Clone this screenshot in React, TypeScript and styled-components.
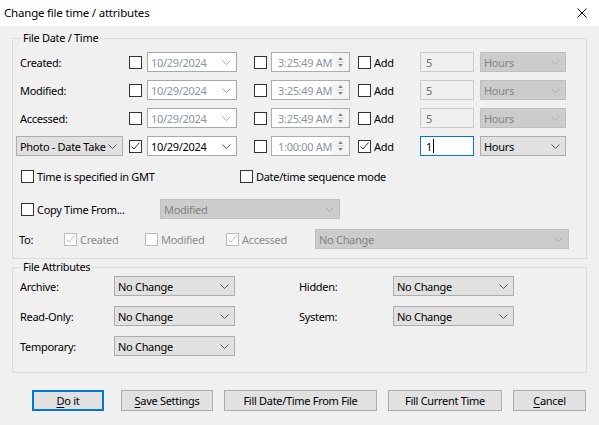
import React from 'react';
import styled, { createGlobalStyle, css } from 'styled-components';

const GlobalStyle = createGlobalStyle`
  html, body {
    margin: 0;
    padding: 0;
    background: #f0f0f0;
  }
  body {
    font-family: "Noto Sans", "Open Sans", sans-serif;
    font-size: 11px;
    letter-spacing: -0.3px;
    color: #000;
  }
`;

const Window = styled.div`
  width: 599px;
  height: 425px;
  display: flex;
  flex-direction: column;
  background: #f0f0f0;
  overflow: hidden;
`;

const TitleBar = styled.div`
  height: 26px;
  flex: none;
  background: #fff;
  display: flex;
  align-items: center;
  justify-content: space-between;
  padding-left: 4px;
`;

const Title = styled.span`
  font-size: 11.5px;
  letter-spacing: -0.2px;
  line-height: 16px;
`;

const CloseButton = styled.div`
  width: 34px;
  height: 26px;
  display: flex;
  align-items: center;
  justify-content: center;
`;

const Body = styled.div`
  padding: 4px 12px 0 12px;
  display: flex;
  flex-direction: column;
`;

const Group = styled.fieldset<{ $pt: number; $pb: number; $mt?: number }>`
  margin: ${({ $mt }) => $mt ?? 0}px 0 0 0;
  padding: ${({ $pt }) => $pt}px 0 ${({ $pb }) => $pb}px 3px;
  border: 1px solid #dcdcdc;
  min-inline-size: 0;
`;

const Legend = styled.legend`
  margin-left: 5px;
  padding: 0 2px;
  line-height: 16px;
`;

const DateGrid = styled.div`
  display: grid;
  grid-template-columns: 113px 18px 107px 17px 87px 62px 60px 86px;
  grid-auto-rows: 20px;
  row-gap: 8px;
  align-items: center;
  justify-items: start;
`;

const RowLabel = styled.span<{ $indent?: number }>`
  padding-left: ${({ $indent }) => $indent ?? 4}px;
  white-space: nowrap;
`;

const Box = styled.span<{ $disabled?: boolean }>`
  width: 13px;
  height: 13px;
  box-sizing: border-box;
  flex: none;
  display: inline-flex;
  align-items: center;
  justify-content: center;
  background: #fff;
  border: 1px solid ${({ $disabled }) => ($disabled ? '#bcbcbc' : '#333333')};
`;

const CheckItem = styled.label<{ $width?: number; $disabled?: boolean }>`
  display: flex;
  align-items: center;
  gap: 3px;
  white-space: nowrap;
  flex: none;
  width: ${({ $width }) => ($width ? `${$width}px` : 'auto')};
  color: ${({ $disabled }) => ($disabled ? '#8d8d8d' : '#000')};
`;

const fieldBase = css`
  box-sizing: border-box;
  height: 20px;
  display: flex;
  align-items: center;
  overflow: hidden;
  white-space: nowrap;
`;

const DateField = styled.div<{ $disabled?: boolean }>`
  ${fieldBase};
  width: 90px;
  background: #fff;
  border: 1px solid #a9a9a9;
  padding: 0 5px 0 3px;
  justify-content: space-between;
  color: ${({ $disabled }) => ($disabled ? '#8a95a1' : '#000')};
`;

const TimeField = styled.div`
  ${fieldBase};
  width: 79px;
  background: #fff;
  border: 1px solid #adadad;
  color: #8a95a1;
`;

const TimeText = styled.span`
  flex: 1;
  overflow: hidden;
  padding-left: 6px;
`;

const Spin = styled.span`
  width: 17px;
  height: 18px;
  flex: none;
  display: flex;
  align-items: center;
  justify-content: center;
  background: #f4f4f4;
`;

const NumField = styled.div<{ $focused?: boolean }>`
  ${fieldBase};
  width: 54px;
  padding-left: 5px;
  background: ${({ $focused }) => ($focused ? '#fff' : '#f0f0f0')};
  border: 1px solid ${({ $focused }) => ($focused ? '#0078d7' : '#cccccc')};
  color: ${({ $focused }) => ($focused ? '#000' : '#6d6d6d')};
`;

const Caret = styled.span`
  display: inline-block;
  width: 1px;
  height: 14px;
  background: #000;
  margin-left: 1px;
`;

const ComboBox = styled.div<{ $width: number; $disabled?: boolean }>`
  ${fieldBase};
  width: ${({ $width }) => $width}px;
  padding: 0 5px 0 3px;
  justify-content: space-between;
  gap: 2px;
  background: ${({ $disabled }) => ($disabled ? '#cccccc' : '#e1e1e1')};
  border: 1px solid ${({ $disabled }) => ($disabled ? '#bfbfbf' : '#adadad')};
  color: ${({ $disabled }) => ($disabled ? '#838383' : '#000')};
`;

const ComboText = styled.span`
  overflow: hidden;
  white-space: nowrap;
  flex: 1;
`;

const OptionRow = styled.div<{ $mt: number; $pl?: number; $h?: number }>`
  display: flex;
  align-items: center;
  height: ${({ $h }) => $h ?? 20}px;
  margin-top: ${({ $mt }) => $mt}px;
  padding-left: ${({ $pl }) => $pl ?? 5}px;
`;

const ToLabel = styled.span`
  width: 45px;
  flex: none;
`;

const AttrGrid = styled.div`
  display: grid;
  grid-template-columns: 98px 121px 60px 98px 121px;
  grid-auto-rows: 20px;
  row-gap: 10px;
  align-items: center;
`;

const ButtonRow = styled.div`
  display: flex;
  gap: 11px;
  margin-top: 17px;
  padding-left: 20px;
`;

const Button = styled.button<{ $width: number; $default?: boolean; $gapAfter?: number }>`
  box-sizing: border-box;
  width: ${({ $width }) => $width}px;
  height: 21px;
  margin: 0 ${({ $gapAfter }) => $gapAfter ?? 0}px 0 0;
  padding: 0;
  font-family: inherit;
  font-size: 11px;
  letter-spacing: -0.3px;
  color: #000;
  background: #e1e1e1;
  border: ${({ $default }) => ($default ? '2px solid #0078d7' : '1px solid #adadad')};
`;

const Key = styled.span`
  text-decoration: underline;
  text-underline-offset: 2px;
`;

const Chevron: React.FC<{ disabled?: boolean }> = ({ disabled }) => (
  <svg width="9" height="5" viewBox="0 0 9 5" style={{ flex: 'none' }}>
    <polyline points="0.5,0.5 4.5,4.5 8.5,0.5" fill="none" stroke={disabled ? '#a8a8a8' : '#5a5a5a'} strokeWidth="1" />
  </svg>
);

const Check: React.FC<{ checked?: boolean; disabled?: boolean }> = ({ checked, disabled }) => (
  <Box $disabled={disabled}>
    {checked && (
      <svg width="11" height="11" viewBox="0 0 11 11">
        <polyline points="1.5,5.5 4,8 9.5,1.5" fill="none" stroke={disabled ? '#bcbcbc' : '#333'} strokeWidth="1" />
      </svg>
    )}
  </Box>
);

const SpinArrows = () => (
  <Spin>
    <svg width="9" height="14" viewBox="0 0 9 14">
      <polygon points="4.5,2 7,5 2,5" fill="#8a8a8a" />
      <line x1="1" y1="7" x2="8" y2="7" stroke="#c8c8c8" />
      <polygon points="2,9 7,9 4.5,12" fill="#8a8a8a" />
    </svg>
  </Spin>
);

const Combo: React.FC<{ width: number; text: string; disabled?: boolean }> = ({ width, text, disabled }) => (
  <ComboBox $width={width} $disabled={disabled}>
    <ComboText>{text}</ComboText>
    <Chevron disabled={disabled} />
  </ComboBox>
);

const DatePicker: React.FC<{ disabled?: boolean }> = ({ disabled }) => (
  <DateField $disabled={disabled}>
    <span>10/29/2024</span>
    <Chevron disabled={disabled} />
  </DateField>
);

const TimePicker: React.FC<{ time: string }> = ({ time }) => (
  <TimeField>
    <TimeText>{time}</TimeText>
    <SpinArrows />
  </TimeField>
);

const dateRows = ['Created:', 'Modified:', 'Accessed:'];

export default function App() {
  return (
    <Window>
      <GlobalStyle />
      <TitleBar>
        <Title>Change file time / attributes</Title>
        <CloseButton>
          <svg width="10" height="10" viewBox="0 0 10 10">
            <path d="M0.5 0.5 L9.5 9.5 M9.5 0.5 L0.5 9.5" stroke="#000" strokeWidth="1" />
          </svg>
        </CloseButton>
      </TitleBar>
      <Body>
        <Group $pt={6} $pb={9}>
          <Legend>File Date / Time</Legend>
          <DateGrid>
            {dateRows.map((label) => (
              <React.Fragment key={label}>
                <RowLabel>{label}</RowLabel>
                <Check />
                <DatePicker disabled />
                <Check />
                <TimePicker time="3:25:49 AM" />
                <CheckItem>
                  <Check />
                  Add
                </CheckItem>
                <NumField>5</NumField>
                <Combo width={86} text="Hours" disabled />
              </React.Fragment>
            ))}
            <Combo width={107} text="Photo - Date Taken" />
            <Check checked />
            <DatePicker />
            <Check />
            <TimePicker time="1:00:00 AM" />
            <CheckItem>
              <Check checked />
              Add
            </CheckItem>
            <NumField $focused>
              1<Caret />
            </NumField>
            <Combo width={86} text="Hours" />
          </DateGrid>

          <OptionRow $mt={12} $h={16}>
            <CheckItem $width={219}>
              <Check />
              Time is specified in GMT
            </CheckItem>
            <CheckItem>
              <Check />
              Date/time sequence mode
            </CheckItem>
          </OptionRow>

          <OptionRow $mt={15}>
            <CheckItem $width={139}>
              <Check />
              Copy Time From...
            </CheckItem>
            <Combo width={180} text="Modified" disabled />
          </OptionRow>

          <OptionRow $mt={10} $pl={3}>
            <ToLabel>To:</ToLabel>
            <CheckItem $width={81} $disabled>
              <Check checked disabled />
              Created
            </CheckItem>
            <CheckItem $width={81} $disabled>
              <Check disabled />
              Modified
            </CheckItem>
            <CheckItem $width={89} $disabled>
              <Check checked disabled />
              Accessed
            </CheckItem>
            <Combo width={254} text="No Change" disabled />
          </OptionRow>
        </Group>

        <Group $pt={1} $pb={16}>
          <Legend>File Attributes</Legend>
          <AttrGrid>
            <RowLabel>Archive:</RowLabel>
            <Combo width={121} text="No Change" />
            <span />
            <RowLabel>Hidden:</RowLabel>
            <Combo width={121} text="No Change" />

            <RowLabel>Read-Only:</RowLabel>
            <Combo width={121} text="No Change" />
            <span />
            <RowLabel>System:</RowLabel>
            <Combo width={121} text="No Change" />

            <RowLabel>Temporary:</RowLabel>
            <Combo width={121} text="No Change" />
          </AttrGrid>
        </Group>

        <ButtonRow>
          <Button $width={72} $default $gapAfter={6}>
            <Key>D</Key>o it
          </Button>
          <Button $width={92}>
            <Key>S</Key>ave Settings
          </Button>
          <Button $width={153}>Fill Date/Time From File</Button>
          <Button $width={114}>Fill Current Time</Button>
          <Button $width={73}>
            <Key>C</Key>ancel
          </Button>
        </ButtonRow>
      </Body>
    </Window>
  );
}
